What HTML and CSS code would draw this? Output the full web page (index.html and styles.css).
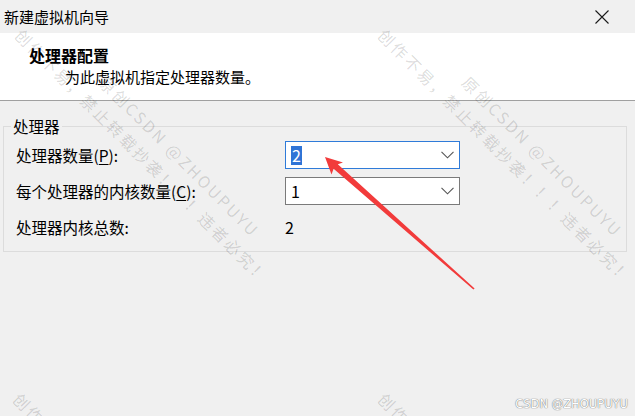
FILE: index.html
```html
<!DOCTYPE html>
<html lang="zh-CN">
<head>
  <meta charset="UTF-8">
  <title>新建虚拟机向导</title>
  <link rel="stylesheet" href="styles.css">
</head>
<body>
  <div class="window">
    <div class="titlebar">
      <span class="title">新建虚拟机向导</span>
      <svg class="close" width="14" height="14" viewBox="0 0 14 14">
        <path d="M0.5 0.5 L13.5 13.5 M13.5 0.5 L0.5 13.5" stroke="#1a1a1a" stroke-width="1.1" fill="none"/>
      </svg>
    </div>

    <div class="header">
      <div class="header-title">处理器配置</div>
      <div class="header-desc">为此虚拟机指定处理器数量。</div>
    </div>

    <div class="body">
      <fieldset class="group">
        <legend>处理器</legend>
        <div class="form-grid">
          <label>处理器数量(<u>P</u>):</label>
          <div class="combo active">
            <span class="sel">2</span>
            <svg class="chevron" width="13" height="8" viewBox="0 0 13 8"><path d="M0.5 0.8 L6.5 6.8 L12.5 0.8" stroke="#555" stroke-width="1.1" fill="none"/></svg>
          </div>

          <label>每个处理器的内核数量(<u>C</u>):</label>
          <div class="combo">
            <span>1</span>
            <svg class="chevron" width="13" height="8" viewBox="0 0 13 8"><path d="M0.5 0.8 L6.5 6.8 L12.5 0.8" stroke="#555" stroke-width="1.1" fill="none"/></svg>
          </div>

          <span>处理器内核总数:</span>
          <span class="value">2</span>
        </div>
      </fieldset>
    </div>

    <!-- watermark overlay -->
    <div class="mark mark-1"><div class="mark-top">原创CSDN @ZHOUPUYU</div><div>创作不易，禁止转载抄袭！！！违者必究！</div></div>
    <div class="mark mark-2"><div class="mark-top">原创CSDN @ZHOUPUYU</div><div>创作不易，禁止转载抄袭！！！违者必究！</div></div>
    <div class="mark mark-3"><div class="mark-top">原创CSDN @ZHOUPUYU</div><div>创作不易，禁止转载抄袭！！！违者必究！</div></div>
    <div class="mark mark-4"><div class="mark-top">原创CSDN @ZHOUPUYU</div><div>创作不易，禁止转载抄袭！！！违者必究！</div></div>

    <svg class="arrow" width="635" height="416" viewBox="0 0 635 416">
      <polygon points="325,157 343,162.5 337.8,164.3 474.6,288.5 473.4,289.5 333.6,168.8 331.5,174.5" fill="#f23b3b"/>
    </svg>

    <div class="csdn-tag">CSDN @ZHOUPUYU</div>
  </div>
</body>
</html>
```

FILE: styles.css
```css
body {
  margin: 0;
  font-family: "Noto Sans CJK SC", "Liberation Sans", sans-serif;
  color: #000;
}

.window {
  position: relative;
  width: 635px;
  height: 416px;
  overflow: hidden;
  background: #f0f0f0;
  display: flex;
  flex-direction: column;
}

.titlebar {
  height: 33px;
  flex: none;
  display: flex;
  align-items: center;
  justify-content: space-between;
  padding: 0 26px 0 4px;
  background: #f0f0f0;
  font-size: 15px;
}

.close {
  display: block;
}

.header {
  height: 68px;
  flex: none;
  box-sizing: border-box;
  padding: 11px 0 0 29px;
  background: #fff;
  border-bottom: 1px solid #a0a0a0;
  box-shadow: 0 1px 0 #fff;
  line-height: 22px;
}

.header-title {
  font-size: 16px;
  font-weight: bold;
}

.header-desc {
  font-size: 15px;
  padding-left: 36px;
}

.body {
  flex: 1;
  background: #f0f0f0;
  padding-top: 14px;
}

.group {
  margin: 0 8px 0 3px;
  padding: 0 0 10px 12px;
  border: 1px solid #dcdcdc;
  min-width: 0;
}

.group legend {
  margin-left: -5px;
  padding: 0 2px;
  font-size: 15.5px;
  line-height: 22px;
}

.form-grid {
  margin-top: 4px;
  display: grid;
  grid-template-columns: 269px 175px;
  grid-auto-rows: 28px;
  row-gap: 8px;
  align-items: center;
  font-size: 15.5px;
}

.form-grid u {
  text-underline-offset: 2px;
}

.combo {
  height: 28px;
  box-sizing: border-box;
  border: 1px solid #7a7a7a;
  background: #fff;
  display: flex;
  align-items: center;
  justify-content: space-between;
  padding: 0 5px 0 5px;
  font-size: 16px;
}

.combo.active {
  border-color: #2f7bd9;
}

.sel {
  background: #2f74d6;
  color: #fff;
  padding: 0 1px;
  line-height: 19px;
}

.chevron {
  display: block;
}

.value {
  font-size: 16px;
}

.mark {
  position: absolute;
  transform: rotate(45deg);
  transform-origin: 0 0;
  white-space: nowrap;
  font-size: 16px;
  letter-spacing: 2.5px;
  line-height: 26px;
  color: rgba(0, 0, 0, 0.15);
  pointer-events: none;
}

.mark-top {
  padding-left: 93px;
}

.mark-1 { left: 46px; top: 4px; }
.mark-2 { left: 409px; top: 4px; }
.mark-3 { left: 44px; top: 368px; }
.mark-4 { left: 409px; top: 368px; }

.arrow {
  position: absolute;
  left: 0;
  top: 0;
  pointer-events: none;
}

.csdn-tag {
  position: absolute;
  right: 7px;
  bottom: 5px;
  font-family: "DejaVu Sans", sans-serif;
  font-size: 11.5px;
  color: #fff;
  text-shadow: 0 0 1px #777, 0 0 1px #777;
}
```
